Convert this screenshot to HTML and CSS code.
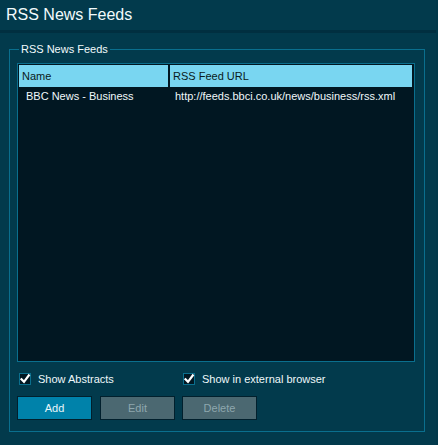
FILE: index.html
```html
<!DOCTYPE html>
<html>
<head>
<meta charset="utf-8">
<link rel="stylesheet" href="styles.css">
</head>
<body>
<div class="window">
  <div class="titlebar">RSS News Feeds</div>
  <div class="titlebar-edge"></div>
  <div class="group">
    <span class="legend">RSS News Feeds</span>
    <div class="listbox">
      <div class="list-head">
        <div class="head-cell">Name</div>
        <div class="head-cell">RSS Feed URL</div>
      </div>
      <div class="list-row">
        <div class="cell cell-name">BBC News - Business</div>
        <div class="cell cell-url">http://feeds.bbci.co.uk/news/business/rss.xml</div>
      </div>
    </div>
    <div class="options">
      <label class="check"><span class="box"><svg viewBox="0 0 12 12" width="12" height="12"><path d="M2.5 6.2 L5 8.8 L9.8 2.4" fill="none" stroke="#ffffff" stroke-width="2.2" stroke-linecap="square"/></svg></span><span>Show Abstracts</span></label>
      <label class="check"><span class="box"><svg viewBox="0 0 12 12" width="12" height="12"><path d="M2.5 6.2 L5 8.8 L9.8 2.4" fill="none" stroke="#ffffff" stroke-width="2.2" stroke-linecap="square"/></svg></span><span>Show in external browser</span></label>
    </div>
    <div class="buttons">
      <button class="btn btn-primary">Add</button>
      <button class="btn btn-disabled btn-edit" disabled>Edit</button>
      <button class="btn btn-disabled" disabled>Delete</button>
    </div>
  </div>
</div>
</body>
</html>
```

FILE: styles.css
```css
html, body {
  margin: 0;
  padding: 0;
  background: #023a4c;
}
body {
  font-family: "Liberation Sans", Arial, sans-serif;
  color: #e8f4f8;
  width: 438px;
  height: 445px;
  overflow: hidden;
}
.window {
  height: 445px;
  box-sizing: border-box;
  border-right: 2px solid #01384a;
}
.titlebar {
  height: 30px;
  box-sizing: border-box;
  padding: 6px 0 0 6px;
  font-size: 16px;
  line-height: 18px;
  color: #f2fafc;
}
.titlebar-edge {
  height: 3px;
  background: #012f40;
}
.group {
  position: relative;
  margin: 16px 0 0 9px;
  width: 416px;
  height: 383px;
  box-sizing: border-box;
  border: 1px solid #0a6f8e;
  padding: 13px 9px 0 7px;
}
.legend {
  position: absolute;
  top: -8px;
  left: 9px;
  padding: 0 2px;
  background: #023a4c;
  font-size: 11px;
  line-height: 14px;
  color: #f2fafc;
}
.listbox {
  height: 299px;
  box-sizing: border-box;
  border: 1px solid #0a6f8e;
  background: #011722;
  padding: 1px;
}
.list-head {
  display: grid;
  grid-template-columns: 149px 242px;
  column-gap: 2px;
  background: #011722;
}
.head-cell {
  height: 22px;
  box-sizing: border-box;
  background: #79d6f1;
  color: #0b1a20;
  font-size: 11px;
  line-height: 22px;
  padding-left: 3px;
}
.list-row {
  display: grid;
  grid-template-columns: 151px 242px;
  height: 18px;
}
.cell {
  font-size: 11px;
  line-height: 18px;
  color: #f0f8fa;
  white-space: nowrap;
}
.cell-name { padding-left: 7px; }
.cell-url { padding-left: 5px; }
.options {
  display: grid;
  grid-template-columns: 164px auto;
  margin-top: 11px;
  padding-left: 2px;
  height: 12px;
}
.check {
  display: flex;
  align-items: center;
  gap: 7px;
  font-size: 11px;
  line-height: 12px;
  color: #eef8fa;
}
.box {
  width: 12px;
  height: 12px;
  box-sizing: border-box;
  border: 1px solid #0a6f8e;
  background: #011722;
  display: flex;
  align-items: center;
  justify-content: center;
}
.box svg {
  display: block;
  flex: none;
}
.buttons {
  display: flex;
  gap: 7px;
  margin-top: 11px;
}
.btn {
  width: 75px;
  height: 24px;
  box-sizing: border-box;
  border: 1px solid #01202d;
  font-family: "Liberation Sans", Arial, sans-serif;
  font-size: 11px;
  padding: 0;
  margin: 0;
}
.btn-primary {
  background: #0082aa;
  color: #e8f6fa;
}
.btn-disabled {
  background: #4b6871;
  color: #8ea7ae;
}
.btn-edit {
  margin-left: 1px;
}
```
